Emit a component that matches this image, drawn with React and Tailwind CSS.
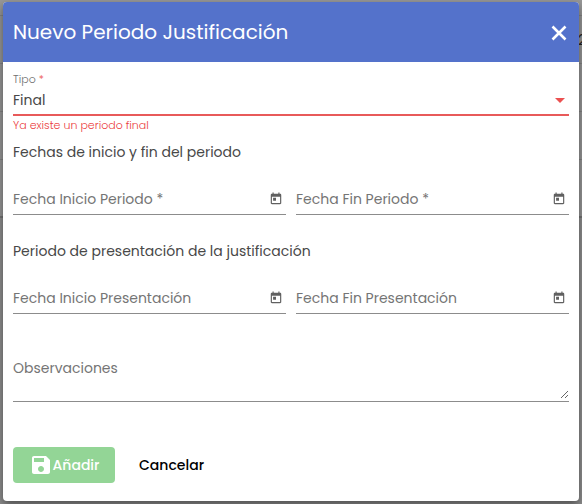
import React from "react";

function CalendarIcon() {
  return (
    <svg viewBox="0 0 24 24" className="size-3.5" fill="currentColor" aria-hidden="true">
      <path d="M19 3h-1V1h-2v2H8V1H6v2H5c-1.110 0-1.990.9-1.990 2L3 19c0 1.100.890 2 2 2h14c1.100 0 2-.9 2-2V5c0-1.100-.9-2-2-2zm0 16H5V8h14v11zM7 10h5v5H7z" />
    </svg>
  );
}

function SaveIcon() {
  return (
    <svg viewBox="0 0 24 24" className="size-6 shrink-0" fill="currentColor" aria-hidden="true">
      <path d="M17 3H5c-1.110 0-2 .9-2 2v14c0 1.100.890 2 2 2h14c1.100 0 2-.9 2-2V7l-4-4zm-5 16c-1.660 0-3-1.340-3-3s1.340-3 3-3 3 1.340 3 3-1.340 3-3 3zm3-10H5V5h10v4z" />
    </svg>
  );
}

function DateField({ id, label }) {
  return (
    <div className="flex h-[31px] min-w-0 flex-1 items-center border-b border-[#8c8c8c] text-[#757575]">
      <label htmlFor={id} className="whitespace-nowrap text-sm">{label}</label>
      <input id={id} type="text" className="min-w-0 flex-1 bg-transparent text-sm outline-none" />
      <button type="button" aria-label="Abrir calendario" className="mr-[3px] flex text-[#606060]">
        <CalendarIcon />
      </button>
    </div>
  );
}

function Backdrop() {
  return (
    <div className="absolute inset-0 -z-10 bg-[#8e8e8e]" aria-hidden="true">
      <div className="h-[218px] border-b-2 border-[#757575] bg-[#979797]">
        <div className="h-4 border-b border-[#848484]" />
        <div className="flex h-12 items-center justify-end overflow-hidden border-b border-[#848484] text-sm text-[#222222]">
          <span className="-mr-1">2</span>
        </div>
        <div className="h-12 border-b border-[#848484]" />
        <div className="h-12 border-b border-[#848484]" />
      </div>
    </div>
  );
}

export default function App() {
  return (
    <div className="relative isolate min-h-screen overflow-hidden px-[3px] pt-0.5 pb-[3px] font-['Poppins','Inter',sans-serif] text-[#484848]">
      <Backdrop />
      <form role="dialog" aria-labelledby="titulo" className="overflow-hidden rounded bg-white shadow-[0_4px_10px_rgba(0,0,0,0.45)]">
        <header className="flex h-[60px] items-center justify-between bg-[#5472cb] px-2.5 text-white">
          <h1 id="titulo" className="text-xl font-normal">Nuevo Periodo Justificación</h1>
          <button type="button" aria-label="Cerrar" className="flex">
            <svg viewBox="0 0 20 20" className="size-5" stroke="currentColor" strokeWidth="2.600" fill="none" aria-hidden="true">
              <path d="M3.500 4.500l13 13M16.500 4.500l-13 13" />
            </svg>
          </button>
        </header>

        <div className="px-2.5 pt-2.5 pb-[18px]">
          <label htmlFor="tipo" className="block h-3.5 text-[11px] font-light leading-3.5 text-[#707070]">
            Tipo <span className="text-[#eb4040]">*</span>
          </label>
          <div className="grid h-[30px] items-center border-b-2 border-[#e85a5a]">
            <select id="tipo" defaultValue="final" aria-describedby="tipo-error" aria-invalid="true" className="col-start-1 row-start-1 h-7 w-full appearance-none bg-transparent text-sm outline-none">
              <option value="final">Final</option>
            </select>
            <svg viewBox="0 0 10 5" className="pointer-events-none col-start-1 row-start-1 mr-1 h-[5px] w-2.5 justify-self-end" aria-hidden="true">
              <path d="M0 0h10L5 5z" fill="#eb5050" />
            </svg>
          </div>
          <p id="tipo-error" className="h-[18px] text-[11px] font-light leading-[18px] text-[#eb4040]">Ya existe un periodo final</p>

          <h2 className="mt-1.5 text-sm leading-6">Fechas de inicio y fin del periodo</h2>
          <div className="mt-5 flex gap-2.5">
            <DateField id="inicio-periodo" label="Fecha Inicio Periodo *" />
            <DateField id="fin-periodo" label="Fecha Fin Periodo *" />
          </div>

          <h2 className="mt-6 text-sm leading-6">Periodo de presentación de la justificación</h2>
          <div className="mt-5 flex gap-2.5">
            <DateField id="inicio-presentacion" label="Fecha Inicio Presentación" />
            <DateField id="fin-presentacion" label="Fecha Fin Presentación" />
          </div>

          <div className="mt-11 grid border-b border-[#8c8c8c] pb-0.5">
            <label htmlFor="observaciones" className="pointer-events-none col-start-1 row-start-1 text-sm text-[#757575]">Observaciones</label>
            <textarea id="observaciones" className="col-start-1 row-start-1 h-[41px] w-full resize-y bg-transparent text-sm outline-none" />
          </div>

          <div className="mt-[45px] flex items-center gap-6">
            <button type="submit" className="flex h-9 w-[102px] items-center justify-center rounded bg-[#93d596] text-sm font-medium text-white">
              <SaveIcon />
              Añadir
            </button>
            <button type="button" className="h-9 text-sm font-medium text-black">Cancelar</button>
          </div>
        </div>
      </form>
    </div>
  );
}
